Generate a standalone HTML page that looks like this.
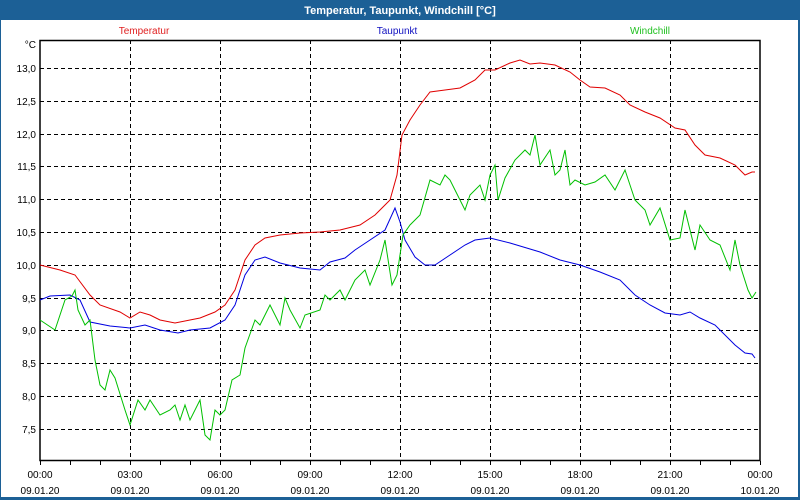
<!DOCTYPE html>
<html><head><meta charset="utf-8"><style>
html,body{margin:0;padding:0;background:#fff;}
body{width:800px;height:500px;overflow:hidden;position:relative;font-family:"Liberation Sans",sans-serif;}
</style></head><body>
<svg width="800" height="500" xmlns="http://www.w3.org/2000/svg" style="position:absolute;left:0;top:0">
<rect x="0" y="0" width="800" height="500" fill="#1c6096"/>
<rect x="1" y="20" width="797" height="477" fill="#fff"/>
<text x="400" y="14" fill="#fff" font-size="11" font-weight="bold" text-anchor="middle" font-family="Liberation Sans, sans-serif">Temperatur, Taupunkt, Windchill [°C]</text>
<g font-family="Liberation Sans, sans-serif" font-size="10">
<text x="144" y="34" fill="#e02020" text-anchor="middle">Temperatur</text>
<text x="397" y="34" fill="#1010c0" text-anchor="middle">Taupunkt</text>
<text x="650" y="34" fill="#20c020" text-anchor="middle">Windchill</text>
<text x="36" y="48" text-anchor="end">°C</text>
<g text-anchor="end">
<text x="36" y="72">13,0</text><text x="36" y="105">12,5</text><text x="36" y="138">12,0</text><text x="36" y="170">11,5</text><text x="36" y="203">11,0</text><text x="36" y="236">10,5</text><text x="36" y="269">10,0</text><text x="36" y="302">9,5</text><text x="36" y="334">9,0</text><text x="36" y="367">8,5</text><text x="36" y="400">8,0</text><text x="36" y="433">7,5</text>
</g>
<g text-anchor="middle">
<text x="40" y="478">00:00</text><text x="40" y="494">09.01.20</text>
<text x="130" y="478">03:00</text><text x="130" y="494">09.01.20</text>
<text x="220" y="478">06:00</text><text x="220" y="494">09.01.20</text>
<text x="310" y="478">09:00</text><text x="310" y="494">09.01.20</text>
<text x="400" y="478">12:00</text><text x="400" y="494">09.01.20</text>
<text x="490" y="478">15:00</text><text x="490" y="494">09.01.20</text>
<text x="580" y="478">18:00</text><text x="580" y="494">09.01.20</text>
<text x="670" y="478">21:00</text><text x="670" y="494">09.01.20</text>
<text x="760" y="478">00:00</text><text x="760" y="494">10.01.20</text>
</g>
</g>
<g stroke="#000" stroke-width="1" stroke-dasharray="4,3">
<path d="M40 68.5H760M40 101.5H760M40 134.5H760M40 166.5H760M40 199.5H760M40 232.5H760M40 265.5H760M40 298.5H760M40 330.5H760M40 363.5H760M40 396.5H760M40 429.5H760"/>
<path d="M130.5 40V460M220.5 40V460M310.5 40V460M400.5 40V460M490.5 40V460M580.5 40V460M670.5 40V460"/>
</g>
<rect x="40" y="40.5" width="720" height="420" fill="none" stroke="#000" stroke-width="1.5"/>
<path stroke="#000" d="M70.5 461v4M100.5 461v4M130.5 461v4M160.5 461v4M190.5 461v4M220.5 461v4M250.5 461v4M280.5 461v4M310.5 461v4M340.5 461v4M370.5 461v4M400.5 461v4M430.5 461v4M460.5 461v4M490.5 461v4M520.5 461v4M550.5 461v4M580.5 461v4M610.5 461v4M640.5 461v4M670.5 461v4M700.5 461v4M730.5 461v4M760.5 461v4M40.5 461v4"/>
<polyline fill="none" stroke="#e00000" stroke-width="1" points="40,265 60,270 75,275 90,295 100,305 120,312 130,318 140,312 150,315 160,320 175,323 190,320 200,318 215,312 225,305 235,290 245,260 255,245 265,238 280,235 300,233 320,232 340,230 360,225 375,215 390,200 397,175 402,135 410,120 420,105 430,92 445,90 460,88 475,80 485,70 495,70 510,63 520,60 530,64 540,63 555,65 570,72 580,80 590,87 605,88 620,95 630,105 645,112 660,118 675,128 685,130 695,145 705,155 720,158 735,165 745,175 752,172 755,172"/>
<polyline fill="none" stroke="#0000e0" stroke-width="1" points="40,300 50,296 70,295 80,300 90,322 110,326 130,328 145,325 160,330 178,333 190,330 210,328 225,320 235,305 245,275 255,260 265,257 280,263 300,268 320,270 330,262 345,258 355,250 370,240 385,230 395,208 400,222 405,240 415,257 425,265 435,265 450,255 465,245 475,240 490,238 510,243 540,252 560,260 580,265 600,272 620,280 635,295 650,305 665,313 680,315 690,312 700,318 715,325 735,345 745,353 752,354 755,358"/>
<polyline fill="none" stroke="#00c000" stroke-width="1" points="40,320 55,330 65,300 72,296 75,290 78,310 85,325 90,320 95,360 100,385 105,390 110,370 115,378 125,410 130,425 138,400 145,410 150,400 160,415 170,410 175,405 180,420 185,405 190,420 200,400 205,435 210,440 215,410 220,415 225,410 232,380 240,375 245,348 255,320 260,325 270,305 280,325 285,298 290,310 300,328 305,315 320,310 325,295 330,300 340,290 345,300 355,280 365,270 370,285 380,260 385,240 392,285 397,275 403,235 410,225 420,215 430,180 440,185 445,175 450,180 455,190 465,210 470,195 480,185 485,200 490,175 495,165 498,200 505,178 515,160 525,150 530,155 535,135 540,165 550,150 555,175 560,170 565,150 570,185 575,180 585,185 595,182 605,175 615,190 625,170 635,200 645,210 650,225 660,208 670,240 680,238 685,210 690,230 695,250 700,225 710,240 720,245 730,270 735,240 740,265 748,290 752,298 756,292"/>
</svg>
</body></html>
